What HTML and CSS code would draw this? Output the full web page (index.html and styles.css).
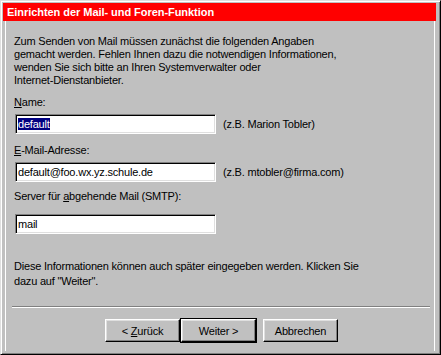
FILE: index.html
```html
<!DOCTYPE html>
<html>
<head>
	<title>Einrichten der Mail- und Foren-Funktion</title>
	<link rel="stylesheet" href="styles.css">
</head>
<body>

<div class="window">
	<div class="titlebar">Einrichten der Mail- und Foren-Funktion</div>

	<div class="panel">
		<p class="intro">
			Zum Senden von Mail müssen zunächst die folgenden Angaben<br>
			gemacht werden. Fehlen Ihnen dazu die notwendigen Informationen,<br>
			wenden Sie sich bitte an Ihren Systemverwalter oder<br>
			Internet-Dienstanbieter.
		</p>

		<div class="field field-name">
			<div class="label"><u>N</u>ame:</div>
			<div class="row">
				<div class="input"><span class="selected">default</span></div>
				<span class="hint">(z.B. Marion Tobler)</span>
			</div>
		</div>

		<div class="field field-mail">
			<div class="label"><u>E</u>-Mail-Adresse:</div>
			<div class="row">
				<div class="input">default@foo.wx.yz.schule.de</div>
				<span class="hint">(z.B. mtobler@firma.com)</span>
			</div>
		</div>

		<div class="field field-smtp">
			<div class="label">Server für <u>a</u>bgehende Mail (SMTP):</div>
			<div class="row">
				<div class="input">mail</div>
			</div>
		</div>

		<p class="note">
			Diese Informationen können auch später eingegeben werden. Klicken Sie<br>
			dazu auf "Weiter".
		</p>

		<div class="separator"></div>

		<div class="buttons">
			<button class="btn">&lt; <u>Z</u>urück</button>
			<button class="btn default">Weiter &gt;</button>
			<button class="btn cancel">Abbrechen</button>
		</div>
	</div>
</div>

</body>
</html>
```

FILE: styles.css
```css
* {
	box-sizing: border-box;
}

html, body {
	margin: 0;
}

body {
	background: #c0c0c0;
	font-family: "Liberation Sans", Arial, sans-serif;
	font-size: 11px;
	letter-spacing: -0.2px;
	color: #000;
}

.window {
	width: 441px;
	height: 355px;
	border: 1px solid;
	border-color: #dfdfdf #000 #000 #dfdfdf;
	box-shadow: inset 1px 1px #fff, inset -1px -1px #808080;
	padding: 2px 4px 3px 2px;
	display: flex;
	flex-direction: column;
}

.titlebar {
	height: 18px;
	line-height: 18px;
	background: #ff0000;
	color: #fff;
	font-weight: bold;
	letter-spacing: -0.05px;
	padding-left: 4px;
}

.panel {
	flex: 1;
	margin: 0 1px 0 2px;
	border-left: 1px solid #fff;
	border-right: 1px solid #fff;
	padding: 14px 0 0 8px;
}

.intro, .note {
	margin: 0;
	line-height: 13px;
}

.label {
	line-height: 13px;
}

.field-name {
	margin-top: 9px;
}

.field-mail {
	margin-top: 10px;
}

.field-smtp {
	margin-top: 8px;
}

.row {
	display: flex;
	align-items: center;
	margin-top: 5px;
}

.field-smtp .row {
	margin-top: 11px;
}

.input {
	width: 201px;
	height: 20px;
	margin-left: 1px;
	background: #fff;
	border: 1px solid;
	border-color: #808080 #fff #fff #808080;
	box-shadow: inset 1px 1px #000, inset -1px -1px #dfdfdf;
	padding: 3px 0 0 2px;
	line-height: 13px;
	white-space: nowrap;
}

.selected {
	background: #000080;
	color: #fff;
}

.hint {
	margin-left: 7px;
}

.note {
	margin-top: 25px;
	line-height: 15px;
}

.separator {
	margin: 17px 4px 0 -2px;
	height: 2px;
	border-top: 1px solid #808080;
	border-bottom: 1px solid #fff;
}

.buttons {
	display: flex;
	margin: 11px 0 0 91px;
}

.btn {
	width: 75px;
	height: 23px;
	font-family: "Liberation Sans", Arial, sans-serif;
	font-size: 11px;
	letter-spacing: -0.2px;
	color: #000;
	background: #c0c0c0;
	border: 1px solid;
	border-color: #fff #000 #000 #fff;
	box-shadow: inset -1px -1px #808080, inset 1px 1px #dfdfdf;
	padding: 0;
	cursor: pointer;
}

.btn.default {
	margin-left: 1px;
	outline: 1px solid #000;
}

.btn.cancel {
	margin-left: 7px;
}
```
